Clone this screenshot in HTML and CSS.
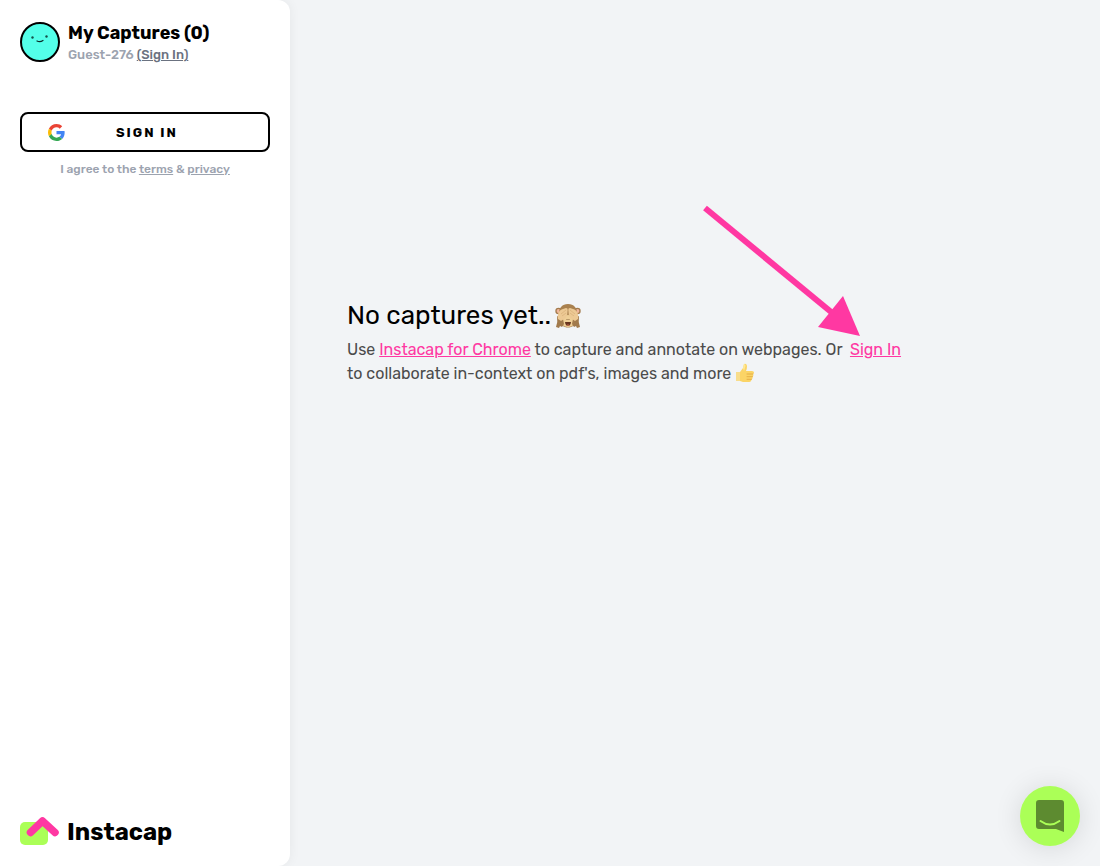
FILE: index.html
```html
<!DOCTYPE html>
<html lang="en">
<head>
    <meta charset="UTF-8">
    <meta name="viewport" content="width=device-width, initial-scale=1.0">
    <title>My Captures - Instacap</title>
    <link rel="stylesheet" href="styles.css">
</head>
<body>
    <aside class="sidebar">
        <!-- User -->
        <div class="user">
            <svg class="avatar" viewBox="0 0 40 40" aria-hidden="true">
                <circle cx="20" cy="20" r="19" fill="#53ffe9" stroke="#000" stroke-width="2"/>
                <circle cx="12.500" cy="15.500" r="1.200" fill="#164f49"/>
                <circle cx="26.500" cy="14.500" r="1.200" fill="#164f49"/>
                <path d="M17 19Q20 20.500 23 18.500" fill="none" stroke="#0b2b28" stroke-width="1.200" stroke-linecap="round"/>
            </svg>
            <div class="user-info">
                <h1>My Captures (0)</h1>
                <p>Guest-276 <a href="#">(Sign In)</a></p>
            </div>
        </div>

        <!-- Google sign in -->
        <button class="google-button" type="button">
            <svg class="google-icon" viewBox="0 0 48 48" aria-hidden="true">
                <path fill="#EA4335" d="M24 9.500c3.540 0 6.710 1.220 9.210 3.600l6.850-6.850C35.900 2.380 30.470 0 24 0 14.620 0 6.510 5.380 2.560 13.220l7.980 6.190C12.430 13.720 17.740 9.500 24 9.500z"/>
                <path fill="#4285F4" d="M46.980 24.550c0-1.570-.15-3.090-.38-4.550H24v9.020h12.940c-.58 2.960-2.260 5.480-4.780 7.180l7.730 6c4.510-4.180 7.090-10.360 7.090-17.650z"/>
                <path fill="#FBBC05" d="M10.530 28.590c-.48-1.450-.76-2.990-.76-4.590s.27-3.140.76-4.590l-7.980-6.190C.92 16.460 0 20.120 0 24s.92 7.540 2.560 10.780l7.970-6.190z"/>
                <path fill="#34A853" d="M24 48c6.480 0 11.930-2.130 15.890-5.810l-7.730-6c-2.150 1.450-4.920 2.300-8.160 2.300-6.260 0-11.570-4.220-13.470-9.910l-7.980 6.190C6.510 42.620 14.620 48 24 48z"/>
            </svg>
            <span>SIGN IN</span>
        </button>
        <p class="agree">I agree to the <a href="#">terms</a> &amp; <a href="#">privacy</a></p>

        <!-- Logo -->
        <div class="logo">
            <svg class="logo-mark" viewBox="0 0 40 30" aria-hidden="true">
                <rect x="0" y="6" width="28" height="23" rx="5" fill="#abff57"/>
                <path d="M10.500 16.500L22.500 5L35 16.500" fill="none" stroke="#ff38a2" stroke-width="7.500" stroke-linecap="round" stroke-linejoin="round"/>
            </svg>
            <span>Instacap</span>
        </div>
    </aside>

    <main class="content">
        <section class="empty">
            <h2>
                No captures yet..
                <svg class="monkey" viewBox="0 0 26 26" role="img" aria-label="See no evil">
                    <circle cx="3.500" cy="8" r="3.200" fill="#a37b4d"/>
                    <circle cx="3.500" cy="8" r="1.900" fill="#f0b59b"/>
                    <circle cx="22.500" cy="8" r="3.200" fill="#a37b4d"/>
                    <circle cx="22.500" cy="8" r="1.900" fill="#f0b59b"/>
                    <path d="M13 1C7 1 4 5 4 10c0 3 1 5 1 8 0 4 4 6.500 8 6.500s8-2.500 8-6.500c0-3 1-5 1-8 0-5-3-9-9-9z" fill="#a9814f"/>
                    <ellipse cx="13" cy="18" rx="7.500" ry="6" fill="#efcf97"/>
                    <path d="M10 19h6q-.5 4-3 4t-3-4z" fill="#67351f"/>
                    <path d="M11.500 22q1.500-1 3 0-1.500 1.500-3 0z" fill="#dd765d"/>
                    <path d="M11.800 16l.4.800M14.200 16l-.4.800" stroke="#79552e"/>
                    <path d="M1 24q2-5 1-11l6 3 1 5-2 3-2-1-1 2z" fill="#a17a4c"/>
                    <path d="M25 24q-2-5-1-11l-6 3-1 5 2 3 2-1 1 2z" fill="#a17a4c"/>
                    <path d="M3 16C2 11 4 7 8 6l3-1q2 0 1.700 2l-.5 5q-1 3-3.200 4l-3 2z" fill="#edc994"/>
                    <path d="M23 16c1-5-1-9-5-10l-3-1q-2 0-1.700 2l.5 5q1 3 3.200 4l3 2z" fill="#edc994"/>
                    <path d="M6 11l5-4M7 13l4-3M20 11l-5-4M19 13l-4-3" stroke="#cfa46d" stroke-width=".5"/>
                </svg>
            </h2>
            <p>
                Use <a href="#">Instacap for Chrome</a> to capture and annotate on webpages. Or &nbsp;<a href="#">Sign In</a><br>
                to collaborate in-context on pdf's, images and more
                <svg class="thumb" viewBox="0 0 20 20" role="img" aria-label="Thumbs up">
                    <path d="M1 10q0-1 1-1h3l3-4 1-4q2.500-1 3 2 0 3-1 5h6q2 0 2 1.500 0 1-1 1.500 1 2-.5 3 .5 1.500-1 2.500 0 2-2 2.500H8L5 18H2q-1 0-1-1z" fill="#fbd466"/>
                    <path d="M12 11h6M12 13.700h5.500M12 16.300h4.500" stroke="#dfa63e" stroke-width=".8" stroke-linecap="round"/>
                    <path d="M1 10q0-1 1-1h3v9H2q-1 0-1-1z" fill="#f8dd8c"/>
                    <path d="M8 5l1-4q1.500 0 1.500 2L9 8z" fill="#ffe998"/>
                </svg>
            </p>
            <!-- Arrow pointing at the sign in link -->
            <svg class="arrow" viewBox="0 0 160 134" aria-hidden="true">
                <path d="M3 4L134 112" stroke="#ff38a2" stroke-width="6"/>
                <path d="M141 92L158 132L116 123z" fill="#ff38a2"/>
            </svg>
        </section>
    </main>

    <!-- Chat launcher -->
    <button class="chat-button" type="button" aria-label="Open chat">
        <svg viewBox="0 0 28 32" aria-hidden="true">
            <path d="M3 0h22q3 0 3 3v29l-8-3H3q-3 0-3-3V3q0-3 3-3z" fill="#5d8b30"/>
            <path d="M4.500 21q9.500 7 19 0" fill="none" stroke="#abff57" stroke-width="2" stroke-linecap="round"/>
        </svg>
    </button>
</body>
</html>
```
FILE: styles.css
```css
* {
    box-sizing: border-box;
}

body {
    display: flex;
    min-height: 100vh;
    margin: 0;
    background-color: #f2f4f6;
    font-family: Rubik, Roboto, sans-serif;
    color: #000;
}

h1, h2, p {
    margin: 0;
}

a {
    color: inherit;
    text-decoration: underline;
}

button {
    font-family: inherit;
    cursor: pointer;
}

/* Sidebar */
.sidebar {
    display: flex;
    flex-direction: column;
    flex: 0 0 290px;
    padding: 20px;
    background-color: #fff;
    border-radius: 0 12px 12px 0;
    box-shadow: 0 0 12px rgba(0, 0, 0, 0.06);
}

.user {
    display: flex;
    align-items: center;
    gap: 8px;
    height: 44px;
    margin-bottom: 48px;
}

.user-info {
    padding-top: 2px;
}

.avatar {
    width: 40px;
    height: 40px;
}

.user h1 {
    font-size: 18px;
    font-weight: 700;
    line-height: 24px;
}

.user p {
    font-size: 13px;
    font-weight: 500;
    line-height: 20px;
    color: #9ca3af;
}

.user a {
    color: #6b7280;
}

.google-button {
    display: flex;
    align-items: center;
    gap: 51px;
    height: 40px;
    padding: 0 26px;
    background-color: #fff;
    border: 2px solid #000;
    border-radius: 8px;
    font-size: 13px;
    font-weight: 700;
    letter-spacing: 2px;
    color: #000;
}

.google-icon {
    width: 17px;
    height: 17px;
}

.agree {
    margin-top: 8px;
    font-size: 12px;
    font-weight: 500;
    line-height: 18px;
    text-align: center;
    color: #9ca3af;
}

.logo {
    display: flex;
    align-items: flex-end;
    gap: 7px;
    margin-top: auto;
    font-size: 24px;
    font-weight: 700;
    line-height: 28px;
}

.logo-mark {
    width: 40px;
    height: 30px;
}

/* Empty state */
.content {
    flex: 1;
    padding: 35vh 57px 0;
}

.empty {
    position: relative;
}

.empty h2 {
    margin-bottom: 10px;
    font-size: 26px;
    font-weight: 400;
    line-height: 25px;
}

.empty p {
    font-size: 16px;
    line-height: 24px;
    color: #4b4b4b;
}

.empty a {
    color: #ff38a2;
}

.monkey {
    width: 26px;
    height: 26px;
    margin: -4px 0 -4px -2px;
    vertical-align: -1px;
}

.thumb {
    width: 20px;
    height: 20px;
    vertical-align: -4px;
}

.arrow {
    position: absolute;
    top: -99px;
    left: 355px;
    width: 160px;
    height: 134px;
    pointer-events: none;
}

/* Chat launcher */
.chat-button {
    position: fixed;
    right: 20px;
    bottom: 20px;
    display: flex;
    align-items: center;
    justify-content: center;
    width: 60px;
    height: 60px;
    padding: 0;
    background-color: #abff57;
    border: none;
    border-radius: 50%;
    box-shadow: 0 2px 28px rgba(0, 0, 0, 0.12);
}

.chat-button svg {
    width: 28px;
    height: 32px;
}
```
